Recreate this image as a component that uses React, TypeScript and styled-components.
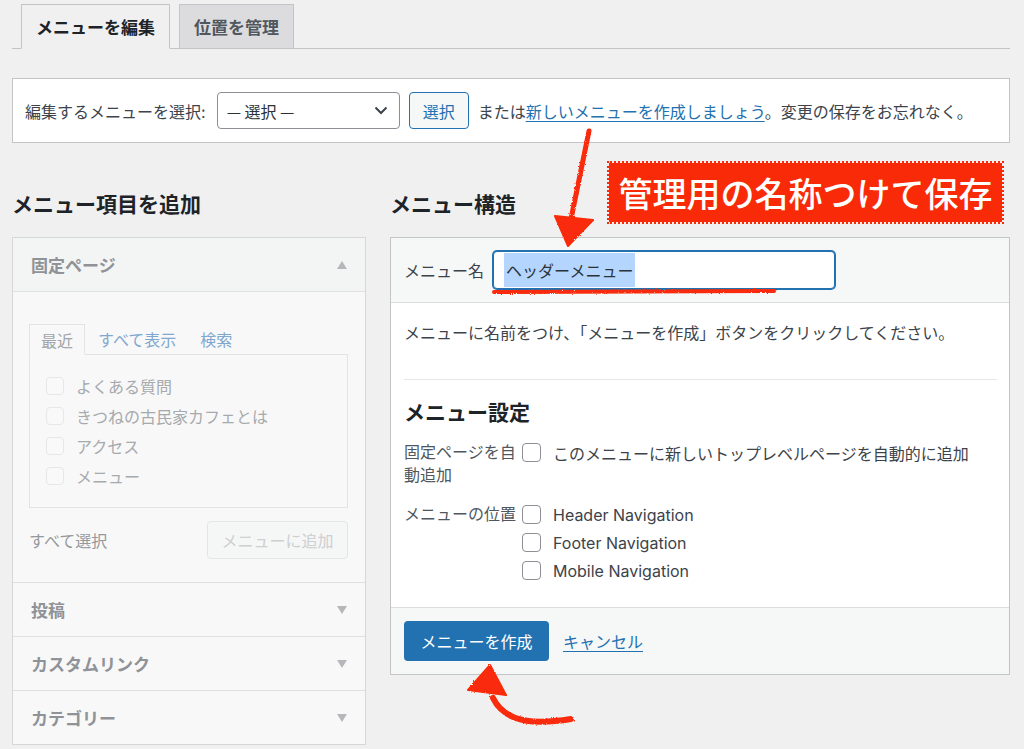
import React from "react";
import styled, { createGlobalStyle } from "styled-components";

const GlobalStyle = createGlobalStyle`
  html, body { margin: 0; padding: 0; background: #f0f0f1; }
  body {
    font-family: Inter, "Noto Sans CJK JP", sans-serif;
    color: #3c434a;
    font-size: 16px;
    overflow: hidden;
  }
  * { box-sizing: border-box; }
`;

const RED = "#f92a07";
const BLUE = "#2271b1";

const Page = styled.div`
  position: relative;
  width: 1024px;
  height: 749px;
  padding: 4px 14px 0 12px;
  overflow: hidden;
`;

const TabBar = styled.nav`
  display: flex;
  gap: 9px;
  padding-left: 9px;
  height: 45px;
  border-bottom: 1px solid #c3c4c7;
`;

const Tab = styled.div<{ $active?: boolean }>`
  height: 45px;
  margin-bottom: -1px;
  padding: 0 14px;
  display: flex;
  align-items: center;
  font-size: 17px;
  font-weight: 700;
  border: 1px solid #c3c4c7;
  border-bottom-color: ${(p) => (p.$active ? "#f0f0f1" : "#c3c4c7")};
  background: ${(p) => (p.$active ? "#f0f0f1" : "#dcdcde")};
  color: ${(p) => (p.$active ? "#1d2327" : "#50575e")};
`;

const SelectBar = styled.div`
  margin-top: 29px;
  height: 65px;
  background: #fff;
  border: 1px solid #c3c4c7;
  display: flex;
  align-items: center;
  padding: 0 12px;
  white-space: nowrap;
`;

const BarLabel = styled.span`
  margin-right: 11px;
`;

const FakeSelect = styled.div`
  width: 183px;
  height: 37px;
  border: 1px solid #8c8f94;
  border-radius: 4px;
  background: #fff;
  display: flex;
  align-items: center;
  justify-content: space-between;
  padding: 0 11px 0 9px;
  color: #2c3338;
  font-family: "Noto Sans CJK JP", sans-serif;
`;

const SecondaryButton = styled.div`
  margin-left: 9px;
  height: 37px;
  padding: 0 13px;
  border: 1px solid ${BLUE};
  border-radius: 4px;
  background: #f6f7f7;
  color: ${BLUE};
  display: flex;
  align-items: center;
`;

const BarText = styled.span`
  margin-left: 9px;
`;

const Link = styled.a`
  color: ${BLUE};
  text-decoration: underline;
  text-underline-offset: 3px;
`;

const Columns = styled.div`
  display: flex;
  gap: 24px;
  margin-top: 47px;
`;

const Column = styled.div<{ $width: number }>`
  width: ${(p) => p.$width}px;
  flex: none;
`;

const Heading = styled.h2`
  margin: 0 0 17px;
  font-size: 21px;
  line-height: 30px;
  font-weight: 700;
  color: #1d2327;
`;

const SideBox = styled.div`
  border: 1px solid #d6d7d9;
  background: #f8f8f8;
`;

const SideHeader = styled.div<{ $h: number; $last?: boolean }>`
  height: ${(p) => p.$h}px;
  display: flex;
  align-items: center;
  justify-content: space-between;
  padding: 0 18px 0 18px;
  font-size: 17px;
  font-weight: 700;
  color: #8f9296;
  background: #f8f8f8;
  border-bottom: ${(p) => (p.$last ? "none" : "1px solid #e0e0e2")};
`;

const OpenHeader = styled(SideHeader)`
  background: #f3f4f4;
`;

const Tri = styled.span<{ $up?: boolean }>`
  width: 0;
  height: 0;
  border-left: 5px solid transparent;
  border-right: 5px solid transparent;
  ${(p) =>
    p.$up
      ? "border-bottom: 8px solid #b5b7ba;"
      : "border-top: 8px solid #b5b7ba;"}
`;

const SideBody = styled.div`
  height: 291px;
  padding: 32px 17px 0 16px;
  border-bottom: 1px solid #e0e0e2;
`;

const InnerTabs = styled.div`
  display: flex;
  align-items: flex-end;
  height: 30px;
`;

const InnerTab = styled.div`
  width: 56px;
  height: 31px;
  margin-bottom: -1px;
  border: 1px solid #e2e3e4;
  border-bottom-color: #f8f8f8;
  background: #f8f8f8;
  color: #a2a5a9;
  display: flex;
  align-items: center;
  justify-content: center;
  position: relative;
`;

const InnerLink = styled.span<{ $ml: number }>`
  margin-left: ${(p) => p.$ml}px;
  height: 30px;
  display: flex;
  align-items: center;
  color: #80a7cf;
`;

const ListBox = styled.div`
  height: 154px;
  border: 1px solid #e2e3e4;
  background: #f8f8f8;
  padding: 16px 16px 0;
`;

const ListItem = styled.div`
  height: 30px;
  display: flex;
  align-items: center;
  gap: 12px;
  color: #a7aaad;
`;

const Check = styled.span<{ $faded?: boolean }>`
  flex: none;
  width: ${(p) => (p.$faded ? 18 : 19)}px;
  height: ${(p) => (p.$faded ? 18 : 19)}px;
  border-radius: 4px;
  border: 1px solid ${(p) => (p.$faded ? "#e6e7e8" : "#8c8f94")};
  background: ${(p) => (p.$faded ? "#f9f9f9" : "#fff")};
`;

const SideFooter = styled.div`
  margin-top: 13px;
  display: flex;
  align-items: center;
  justify-content: space-between;
  color: #95989c;
`;

const DisabledButton = styled.div`
  width: 141px;
  height: 38px;
  border: 1px solid #e4e5e6;
  border-radius: 4px;
  background: #f5f6f6;
  color: #cdcfd1;
  display: flex;
  align-items: center;
  justify-content: center;
`;

const MainBox = styled.div`
  border: 1px solid #c3c4c7;
  background: #fff;
`;

const MainHeader = styled.div`
  height: 65px;
  background: #f6f7f7;
  border-bottom: 1px solid #dcdcde;
  display: flex;
  align-items: center;
  padding: 0 13px;
  gap: 9px;
`;

const NameInput = styled.div`
  width: 342px;
  height: 38px;
  border: 1px solid ${BLUE};
  box-shadow: 0 0 0 1px ${BLUE};
  border-radius: 4px;
  background: #fff;
  padding: 1px 0 1px 10px;
  display: flex;
  align-items: stretch;
`;

const Selected = styled.span`
  background: #b4d5fe;
  color: #2c3338;
  display: flex;
  align-items: center;
  padding: 0 2px;
`;

const MainBody = styled.div`
  padding: 18px 12px 25px 13px;
`;

const Para = styled.p`
  margin: 0;
  line-height: 24px;
`;

const Rule = styled.hr`
  margin: 34px 0 18px;
  border: 0;
  border-top: 1px solid #e6e7e8;
`;

const SubHeading = styled.h3`
  margin: 0 0 13px;
  font-size: 21px;
  line-height: 30px;
  font-weight: 700;
  color: #1d2327;
`;

const SettingRow = styled.div<{ $mt?: number }>`
  display: grid;
  grid-template-columns: 118px 1fr;
  margin-top: ${(p) => p.$mt ?? 0}px;
`;

const SettingLabel = styled.div`
  line-height: 23px;
  color: #50575e;
`;

const Options = styled.div`
  display: flex;
  flex-direction: column;
  gap: 5px;
`;

const Option = styled.label`
  height: 23px;
  display: flex;
  align-items: center;
  gap: 12px;
  color: #3c434a;
`;

const MainFooter = styled.div`
  background: #f6f7f7;
  border-top: 1px solid #dcdcde;
  padding: 13px 13px 13px;
  display: flex;
  align-items: center;
`;

const PrimaryButton = styled.div`
  width: 145px;
  height: 40px;
  background: ${BLUE};
  color: #fff;
  border-radius: 4px;
  display: flex;
  align-items: center;
  justify-content: center;
`;

const CancelLink = styled(Link)`
  margin-left: 14px;
`;

const Callout = styled.div`
  position: absolute;
  left: 609px;
  top: 163px;
  width: 393px;
  height: 59px;
  background: ${RED};
  outline: 2px dotted ${RED};
  color: #fff;
  font-family: "Noto Sans CJK JP", sans-serif;
  font-size: 34px;
  font-weight: 500;
  display: flex;
  align-items: center;
  justify-content: center;
  letter-spacing: 0;
`;

const Overlay = styled.svg`
  position: absolute;
  left: 0;
  top: 0;
  pointer-events: none;
`;

export default function App() {
  return (
    <>
      <GlobalStyle />
      <Page>
        <TabBar>
          <Tab $active>メニューを編集</Tab>
          <Tab>位置を管理</Tab>
        </TabBar>

        <SelectBar>
          <BarLabel>編集するメニューを選択:</BarLabel>
          <FakeSelect>
            <span>— 選択 —</span>
            <svg width="14" height="9" viewBox="0 0 14 9">
              <path d="M1.5 1.5 L7 7 L12.5 1.5" fill="none" stroke="#3c434a" strokeWidth="2" />
            </svg>
          </FakeSelect>
          <SecondaryButton>選択</SecondaryButton>
          <BarText>
            または<Link>新しいメニューを作成しましょう</Link>。変更の保存をお忘れなく。
          </BarText>
        </SelectBar>

        <Columns>
          <Column $width={354}>
            <Heading>メニュー項目を追加</Heading>
            <SideBox>
              <OpenHeader $h={54}>
                固定ページ
                <Tri $up />
              </OpenHeader>
              <SideBody>
                <InnerTabs>
                  <InnerTab>最近</InnerTab>
                  <InnerLink $ml={13}>すべて表示</InnerLink>
                  <InnerLink $ml={24}>検索</InnerLink>
                </InnerTabs>
                <ListBox>
                  {["よくある質問", "きつねの古民家カフェとは", "アクセス", "メニュー"].map((t) => (
                    <ListItem key={t}>
                      <Check $faded />
                      {t}
                    </ListItem>
                  ))}
                </ListBox>
                <SideFooter>
                  すべて選択
                  <DisabledButton>メニューに追加</DisabledButton>
                </SideFooter>
              </SideBody>
              <SideHeader $h={54}>
                投稿
                <Tri />
              </SideHeader>
              <SideHeader $h={54}>
                カスタムリンク
                <Tri />
              </SideHeader>
              <SideHeader $h={53} $last>
                カテゴリー
                <Tri />
              </SideHeader>
            </SideBox>
          </Column>

          <Column $width={620}>
            <Heading>メニュー構造</Heading>
            <MainBox>
              <MainHeader>
                <span>メニュー名</span>
                <NameInput>
                  <Selected>ヘッダーメニュー</Selected>
                </NameInput>
              </MainHeader>
              <MainBody>
                <Para>メニューに名前をつけ、「メニューを作成」ボタンをクリックしてください。</Para>
                <Rule />
                <SubHeading>メニュー設定</SubHeading>
                <SettingRow>
                  <SettingLabel>固定ページを自動追加</SettingLabel>
                  <Options>
                    <Option>
                      <Check />
                      このメニューに新しいトップレベルページを自動的に追加
                    </Option>
                  </Options>
                </SettingRow>
                <SettingRow $mt={16}>
                  <SettingLabel>メニューの位置</SettingLabel>
                  <Options>
                    <Option>
                      <Check />
                      Header Navigation
                    </Option>
                    <Option>
                      <Check />
                      Footer Navigation
                    </Option>
                    <Option>
                      <Check />
                      Mobile Navigation
                    </Option>
                  </Options>
                </SettingRow>
              </MainBody>
              <MainFooter>
                <PrimaryButton>メニューを作成</PrimaryButton>
                <CancelLink>キャンセル</CancelLink>
              </MainFooter>
            </MainBox>
          </Column>
        </Columns>

        <Callout>管理用の名称つけて保存</Callout>

        <Overlay width="1024" height="749" viewBox="0 0 1024 749">
          <defs>
            <filter id="rough" x="-10%" y="-10%" width="120%" height="120%">
              <feTurbulence type="fractalNoise" baseFrequency="0.9" numOctaves="2" result="n" />
              <feDisplacementMap in="SourceGraphic" in2="n" scale="2.5" />
            </filter>
          </defs>
          <g filter="url(#rough)" fill={RED} stroke={RED} strokeLinecap="round" strokeLinejoin="round">
            <path d="M589 131 L570 224" fill="none" strokeWidth="5" />
            <polygon points="555,216 593,220 568,246" strokeWidth="2" />
            <path d="M494 292 L774 291" fill="none" strokeWidth="4" />
            <path d="M571 719 C 540 724 506 725 493 698" fill="none" strokeWidth="6" />
            <polygon points="490,665 468,690 506,695" strokeWidth="2" />
          </g>
        </Overlay>
      </Page>
    </>
  );
}
